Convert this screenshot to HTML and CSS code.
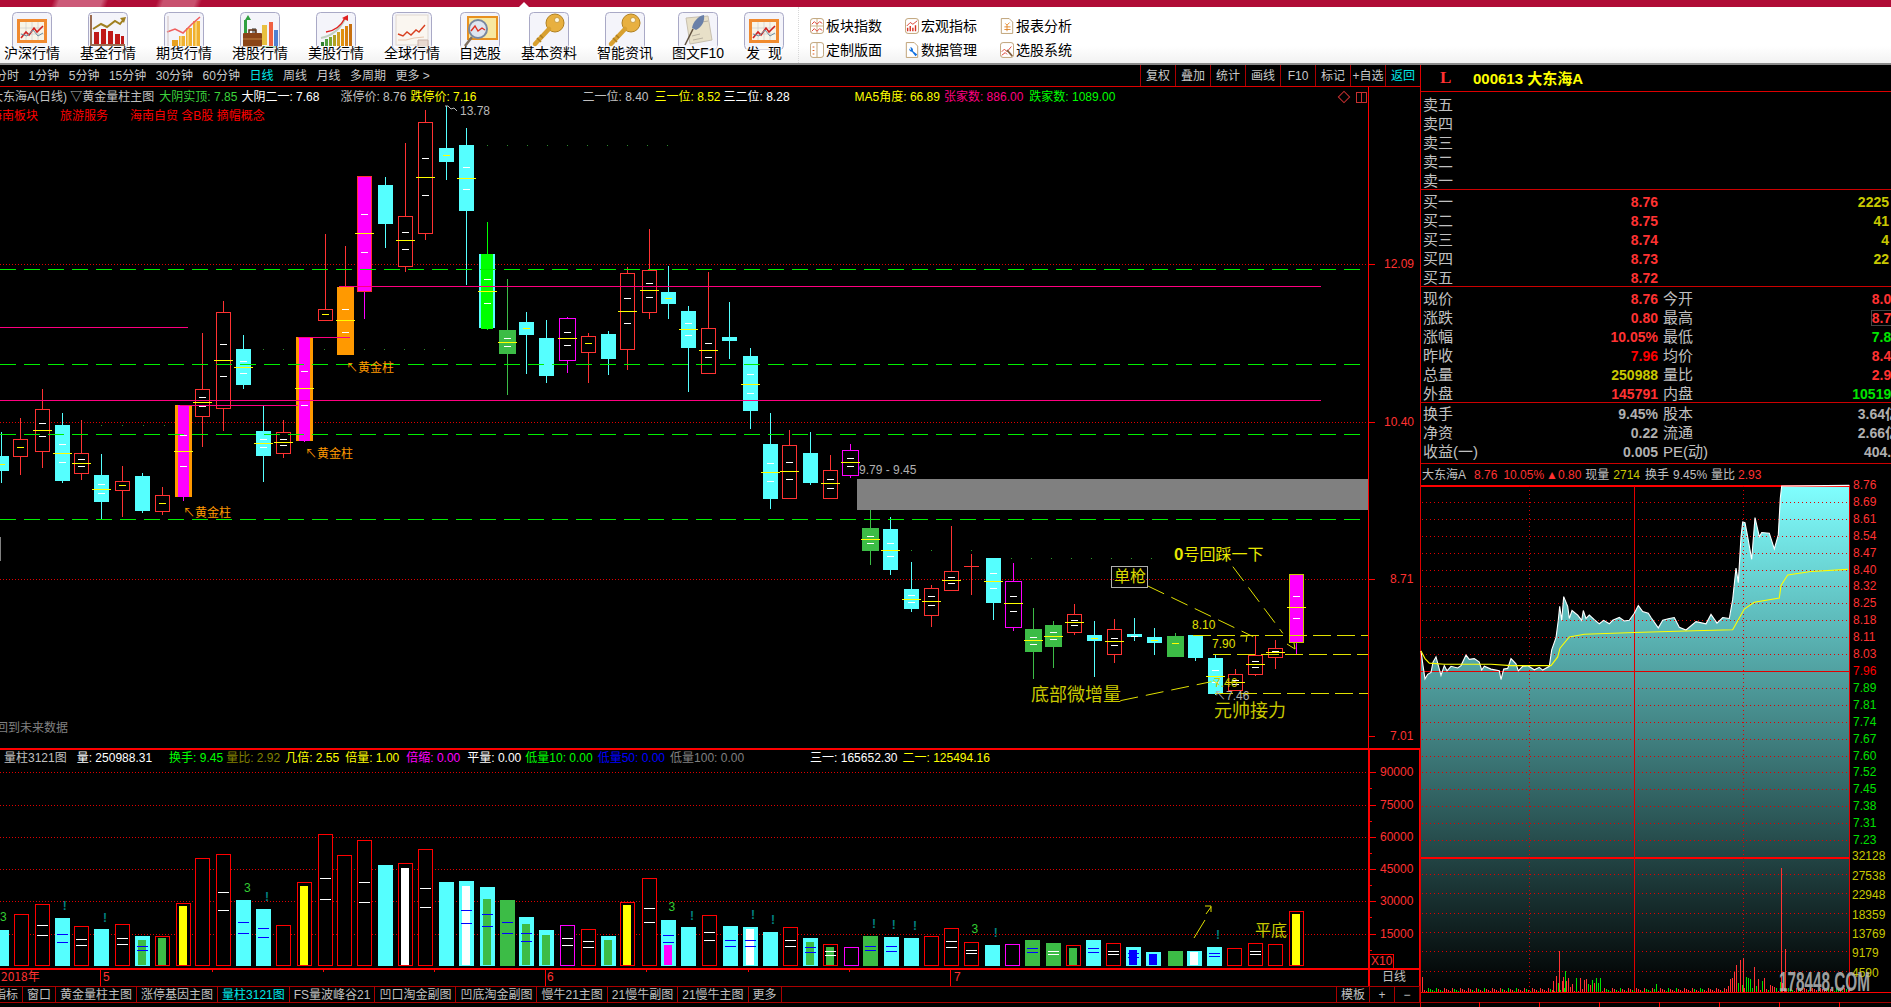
FILE: index.html
```html
<!DOCTYPE html>
<html lang="zh-CN">
<head>
<meta charset="utf-8">
<title>大东海A 000613</title>
<link rel="stylesheet" href="styles.css">
</head>
<body>
<svg class="defs" width="0" height="0" aria-hidden="true">
  <symbol id="ic-chart" viewBox="0 0 40 38">
    <rect x="5" y="7" width="30" height="24" fill="#f08a30"/><rect x="8" y="10" width="24" height="18" fill="#f8f4e8"/>
    <path d="M8 16h24M8 22h24M14 10v18M20 10v18M26 10v18" stroke="#c8c8c8" stroke-width=".6"/>
    <path d="M9 26l5-6 3 3 5-7 3 4 6-6" fill="none" stroke="#d02020" stroke-width="1.6"/>
    <path d="M9 22l6 2 6-6 5 6 5-3" fill="none" stroke="#7090a0" stroke-width="1"/>
  </symbol>
  <symbol id="ic-fund" viewBox="0 0 40 38">
    <path d="M3 3v30h34" fill="none" stroke="#9a6a50" stroke-width="2"/>
    <path d="M6 20h5v12H6zM13 17h5v15h-5zM20 19h5v13h-5zM27 22h5v10h-5zM33 24h3v8h-3z" fill="#c01818"/>
    <path d="M5 17l8-5 6 3 8-6 5 3 4-5" fill="none" stroke="#a08020" stroke-width="2"/>
    <path d="M32 6l6-1-2 6z" fill="#a08020"/>
  </symbol>
  <symbol id="ic-future" viewBox="0 0 40 38">
    <path d="M15 24h6v10h-6zM22 16h6v18h-6zM29 9h7v25h-7z" fill="#f0b030"/><path d="M8 28h6v6H8z" fill="#e8a020"/>
    <path d="M17 24v10M24 16v18M32 9v25" stroke="#fff0b0" stroke-width="1"/>
    <path d="M3 20l8-3 8 4 9-9 8-7" fill="none" stroke="#f06060" stroke-width="1.6"/>
    <path d="M4 4v30" stroke="#d0c0c0"/>
  </symbol>
  <symbol id="ic-hk" viewBox="0 0 40 38">
    <path d="M8 3l-3 5h6zM4 8h3v18H4z" fill="#30a040"/>
    <path d="M12 16h4v10h-4z" fill="#909090"/><path d="M22 13h5v20h-5z" fill="#e8c040"/><path d="M29 10h4v24h-4z" fill="#f06040"/><path d="M34 18h4v16h-4z" fill="#5080d0"/>
    <rect x="3" y="21" width="19" height="14" rx="1" fill="#8a4418"/><path d="M9 21v-3h7v3" fill="none" stroke="#5a2c10" stroke-width="1.5"/><path d="M3 27h19" stroke="#c08040"/>
    <path d="M22 35h14" stroke="#30a040" stroke-width="1.5"/>
  </symbol>
  <symbol id="ic-us" viewBox="0 0 40 38">
    <path d="M5 30h3v4H5z" fill="#308030"/><path d="M9 27h3v7H9z" fill="#50a040"/><path d="M13 25h3v9h-3z" fill="#80a830"/><path d="M17 23h3v11h-3z" fill="#b0a020"/><path d="M21 20h3v14h-3z" fill="#d0a020"/><path d="M25 17h3v17h-3z" fill="#e09010"/><path d="M29 14h3v20h-3z" fill="#d88010"/><path d="M33 12h3v22h-3z" fill="#c87010"/>
    <path d="M5 26c10-2 18-7 24-19" fill="none" stroke="#c0d0c0" stroke-width="2"/>
    <path d="M10 20c8-1 15-6 19-14" fill="none" stroke="#e02020" stroke-width="1.4"/><path d="M26 6l6-3v6z" fill="#e02020"/>
  </symbol>
  <symbol id="ic-world" viewBox="0 0 40 38">
    <rect x="4" y="3" width="32" height="30" fill="#faf6f0" stroke="#e0d8d0"/>
    <path d="M6 22l5 2 4-4 4 3 5-5 3 2 6-7" fill="none" stroke="#d84020" stroke-width="1.4"/>
    <path d="M6 28l8 0 8-2 10-1" fill="none" stroke="#e8c8b0" stroke-width="1.2"/>
    <path d="M26 28h10v7H26z" fill="#e8d8d0" stroke="#c8b0a8"/>
  </symbol>
  <symbol id="ic-search" viewBox="0 0 40 38">
    <rect x="8" y="5" width="29" height="22" fill="#f8e8a0" stroke="#e89020" stroke-width="2"/>
    <circle cx="18" cy="17" r="9" fill="#dfe6f0" stroke="#7a88a0" stroke-width="2"/>
    <path d="M11 19l4-5 3 5 4-3 3 2" fill="none" stroke="#e03020" stroke-width="1.4"/>
    <path d="M12 25l-7 9" stroke="#807060" stroke-width="2.5"/>
  </symbol>
  <symbol id="ic-key" viewBox="0 0 40 38">
    <circle cx="26" cy="11" r="9" fill="#e8b040" stroke="#b08020"/><circle cx="28" cy="8" r="2.5" fill="#fff8e0" stroke="#b08020" stroke-width=".6"/>
    <path d="M20 17L6 32" stroke="#d8a030" stroke-width="4.5" stroke-linecap="round"/>
    <path d="M8 26l4 4M11 23l3 3" stroke="#b08020" stroke-width="1.6"/>
  </symbol>
  <symbol id="ic-quill" viewBox="0 0 40 38">
    <path d="M8 6l22-2 4 24-22 4z" fill="#e8e0c8" stroke="#c8c0b0"/>
    <path d="M14 24l8-2M15 28l10-2M24 10l6-1" stroke="#b8b0a0"/>
    <path d="M26 3c-6 1-11 7-12 13l4 2c6-3 9-9 8-15z" fill="#6a80a8"/><path d="M15 17L7 33" stroke="#605040" stroke-width="1.5"/>
  </symbol>
  <symbol id="sm-grid" viewBox="0 0 16 18"><rect x=".5" y=".5" width="15" height="17" rx="3" fill="#fff" stroke="#b89868"/><path d="M1 9h14M8 1v16" stroke="#c8a878"/><path d="M2 7l3-3 3 3 3-3 3 2M2 15l3-3 3 3 3-3 3 2" fill="none" stroke="#d83020"/></symbol>
  <symbol id="sm-bars" viewBox="0 0 16 18"><rect x=".5" y=".5" width="15" height="17" rx="3" fill="#fff" stroke="#b89868"/><path d="M3 15V11M6 15V9M9 15V11M12 15V8" stroke="#d83020" stroke-width="1.6"/><path d="M2 9l4-4 3 2 5-4" fill="none" stroke="#d83020"/></symbol>
  <symbol id="sm-doc" viewBox="0 0 16 18"><path d="M1.5.5h9l4 4v13h-13z" fill="#fff" stroke="#b89868"/><path d="M6 6l2 2 3-3M5 10h7M5 13h7M8 8v7" fill="none" stroke="#e08020"/></symbol>
  <symbol id="sm-panel" viewBox="0 0 16 18"><rect x=".5" y=".5" width="15" height="17" rx="3" fill="#fff" stroke="#b89868"/><path d="M8 1v16" stroke="#b89868"/><path d="M4 5v1M4 9v1M4 13v1" stroke="#e06020" stroke-width="2"/></symbol>
  <symbol id="sm-tool" viewBox="0 0 16 18"><path d="M1.5.5h9l4 4v13h-13z" fill="#fff" stroke="#b89868"/><path d="M5 7a3 3 0 0 0 3 4l4 5 2-2-5-4a3 3 0 0 0-3-4l1 2-1 1z" fill="#1070e0"/></symbol>
  <symbol id="sm-pick" viewBox="0 0 16 18"><rect x=".5" y=".5" width="15" height="17" rx="3" fill="#fff" stroke="#b89868"/><path d="M2 11l3-3 3 3 5-6" fill="none" stroke="#d83020"/><path d="M2 15l4-3 2 2" fill="none" stroke="#d83020"/><path d="M8 9l6 7" stroke="#806040" stroke-width="2"/></symbol>
</svg>

<div class="app">
  <div class="titlebar"><span class="notch"></span></div>
  <header class="toolbar">
    <div class="tool w76"><svg class="tool-icon"><rect class="frame" x=".5" y=".5" width="39" height="37" rx="4"/><use href="#ic-chart" width="40" height="38"/></svg><span class="tool-label">沪深行情</span></div>
    <div class="tool w76"><svg class="tool-icon"><rect class="frame" x=".5" y=".5" width="39" height="37" rx="4"/><use href="#ic-fund" width="40" height="38"/></svg><span class="tool-label">基金行情</span></div>
    <div class="tool w76"><svg class="tool-icon"><rect class="frame" x=".5" y=".5" width="39" height="37" rx="4"/><use href="#ic-future" width="40" height="38"/></svg><span class="tool-label">期货行情</span></div>
    <div class="tool w76"><svg class="tool-icon"><rect class="frame" x=".5" y=".5" width="39" height="37" rx="4"/><use href="#ic-hk" width="40" height="38"/></svg><span class="tool-label">港股行情</span></div>
    <div class="tool w76"><svg class="tool-icon"><rect class="frame" x=".5" y=".5" width="39" height="37" rx="4"/><use href="#ic-us" width="40" height="38"/></svg><span class="tool-label">美股行情</span></div>
    <div class="tool w76"><svg class="tool-icon"><rect class="frame" x=".5" y=".5" width="39" height="37" rx="4"/><use href="#ic-world" width="40" height="38"/></svg><span class="tool-label">全球行情</span></div>
    <div class="tool w60"><svg class="tool-icon"><rect class="frame" x=".5" y=".5" width="39" height="37" rx="4"/><use href="#ic-search" width="40" height="38"/></svg><span class="tool-label">自选股</span></div>
    <div class="tool w78"><svg class="tool-icon"><rect class="frame" x=".5" y=".5" width="39" height="37" rx="4"/><use href="#ic-key" width="40" height="38"/></svg><span class="tool-label">基本资料</span></div>
    <div class="tool w74"><svg class="tool-icon"><rect class="frame" x=".5" y=".5" width="39" height="37" rx="4"/><use href="#ic-key" width="40" height="38"/></svg><span class="tool-label">智能资讯</span></div>
    <div class="tool w72"><svg class="tool-icon"><rect class="frame" x=".5" y=".5" width="39" height="37" rx="4"/><use href="#ic-quill" width="40" height="38"/></svg><span class="tool-label">图文F10</span></div>
    <div class="tool w60"><svg class="tool-icon"><rect class="frame" x=".5" y=".5" width="39" height="37" rx="4"/><use href="#ic-chart" width="40" height="38"/></svg><span class="tool-label">发&nbsp;&nbsp;现</span></div>
    <div class="tool-links">
      <a class="link"><svg class="link-icon"><use href="#sm-grid"/></svg>板块指数</a>
      <a class="link"><svg class="link-icon"><use href="#sm-bars"/></svg>宏观指标</a>
      <a class="link"><svg class="link-icon"><use href="#sm-doc"/></svg>报表分析</a>
      <a class="link"><svg class="link-icon"><use href="#sm-panel"/></svg>定制版面</a>
      <a class="link"><svg class="link-icon"><use href="#sm-tool"/></svg>数据管理</a>
      <a class="link"><svg class="link-icon"><use href="#sm-pick"/></svg>选股系统</a>
    </div>
  </header>

  <div class="workspace">
    <main class="main">
      <nav class="periods">
        <span>分时</span><span>1分钟</span><span>5分钟</span><span>15分钟</span><span>30分钟</span><span>60分钟</span><span class="cur">日线</span><span>周线</span><span>月线</span><span>多周期</span><span>更多 &gt;</span>
        <div class="btns"><span>复权</span><span>叠加</span><span>统计</span><span>画线</span><span>F10</span><span>标记</span><span>+自选</span><span class="cur">返回</span></div>
      </nav>

      <section class="pane pane-price">
        <svg id="priceChart" class="chart" viewBox="0 87 1420 661" width="1420" height="661"></svg>
        <div class="legend">
          <div class="legend-row">
            <span class="grey name">大东海A(日线) ▽黄金量柱主图</span>
            <span class="green3 ml5">大阴实顶: 7.85</span>
            <span class="white ml4">大阴二一: 7.68</span>
            <span class="grey ml21">涨停价: 8.76</span>
            <span class="yellow ml4">跌停价: 7.16</span>
            <span class="grey ml106">二一位: 8.40</span>
            <span class="yellow ml6">三一位: 8.52</span>
            <span class="white ml3">三二位: 8.28</span>
            <span class="yellow ml65">MA5角度: 66.89</span>
            <span class="pink ml4">张家数: 886.00</span>
            <span class="lime ml6">跌家数: 1089.00</span>
          </div>
          <div class="legend-row concepts">
            <span class="red trim">海南板块</span><span class="red ml22">旅游服务</span><span class="red ml22">海南自贸 含B股 摘帽概念</span>
          </div>
        </div>
      </section>

      <section class="pane pane-volume">
        <svg id="volumeChart" class="chart" viewBox="0 748 1420 238" width="1420" height="238"></svg>
        <div class="legend legend-vol">
          <div class="legend-row">
            <span class="grey v-name">量柱3121图</span>
            <span class="white ml10">量: 250988.31</span>
            <span class="lime ml17">换手: 9.45</span>
            <span class="olive ml3">量比: 2.92</span>
            <span class="yellow ml5">几倍: 2.55</span>
            <span class="yellow ml6">倍量: 1.00</span>
            <span class="magenta ml7">倍缩: 0.00</span>
            <span class="white ml7">平量: 0.00</span>
            <span class="lime ml4">低量10: 0.00</span>
            <span class="blue ml5">低量50: 0.00</span>
            <span class="dim ml5">低量100: 0.00</span>
            <span class="white ml66">三一: 165652.30</span>
            <span class="yellow ml5">二一: 125494.16</span>
          </div>
        </div>
      </section>

      <nav class="tabs">
        <span class="tab first">指标</span><span class="tab">窗口</span><span class="tab">黄金量柱主图</span><span class="tab">涨停基因主图</span><span class="tab cur">量柱3121图</span><span class="tab">FS量波峰谷21</span><span class="tab">凹口淘金副图</span><span class="tab">凹底淘金副图</span><span class="tab">慢牛21主图</span><span class="tab">21慢牛副图</span><span class="tab">21慢牛主图</span><span class="tab">更多</span>
        <div class="tabs-right"><span class="tab">模板</span><span class="tab sq">+</span><span class="tab sq">−</span></div>
      </nav>
    </main>

    <aside class="side">
      <div class="quote-head"><span class="lv">L</span><span class="code">000613 大东海A</span></div>

      <div class="block b-sell">
        <div class="row"><span class="lb">卖五</span></div>
        <div class="row"><span class="lb">卖四</span></div>
        <div class="row"><span class="lb">卖三</span></div>
        <div class="row"><span class="lb">卖二</span></div>
        <div class="row"><span class="lb">卖一</span></div>
      </div>

      <div class="block b-buy">
        <div class="row"><span class="lb">买一</span><span class="val up">8.76</span><span class="val vol">2225</span></div>
        <div class="row"><span class="lb">买二</span><span class="val up">8.75</span><span class="val vol">41</span></div>
        <div class="row"><span class="lb">买三</span><span class="val up">8.74</span><span class="val vol">4</span></div>
        <div class="row"><span class="lb">买四</span><span class="val up">8.73</span><span class="val vol">22</span></div>
        <div class="row"><span class="lb">买五</span><span class="val up">8.72</span></div>
      </div>

      <div class="block b-stat">
        <div class="row"><span class="lb">现价</span><span class="val up">8.76</span><span class="lb2">今开</span><span class="val up">8.08</span></div>
        <div class="row"><span class="lb">涨跌</span><span class="val up">0.80</span><span class="lb2">最高</span><span class="val up boxed">8.76</span></div>
        <div class="row"><span class="lb">涨幅</span><span class="val up">10.05%</span><span class="lb2">最低</span><span class="val down">7.85</span></div>
        <div class="row"><span class="lb">昨收</span><span class="val flat">7.96</span><span class="lb2">均价</span><span class="val up">8.40</span></div>
        <div class="row"><span class="lb">总量</span><span class="val vol2">250988</span><span class="lb2">量比</span><span class="val up">2.93</span></div>
        <div class="row"><span class="lb">外盘</span><span class="val up">145791</span><span class="lb2">内盘</span><span class="val down">105197</span></div>
      </div>

      <div class="block b-fin">
        <div class="row"><span class="lb">换手</span><span class="val gr">9.45%</span><span class="lb2">股本</span><span class="val gr">3.64亿</span></div>
        <div class="row"><span class="lb">净资</span><span class="val gr">0.22</span><span class="lb2">流通</span><span class="val gr">2.66亿</span></div>
        <div class="row"><span class="lb">收益(一)</span><span class="val gr">0.005</span><span class="lb2">PE(动)</span><span class="val gr">404.5</span></div>
      </div>

      <div class="ticker">
        <span class="grey">大东海A</span><span class="up t8">8.76</span><span class="up t6">10.05%</span><span class="up t2">▲0.80</span><span class="grey t4">现量</span><span class="vol2 t4">2714</span><span class="grey t5">换手</span><span class="grey t4">9.45%</span><span class="grey t4">量比</span><span class="up t3">2.93</span>
      </div>

      <svg id="intraChart" class="chart" viewBox="1420 485 479 522" width="479" height="522"></svg>
    </aside>
  </div>
</div>
<script src="chart.js"></script>
</body>
</html>
```
FILE: styles.css
```css
* { box-sizing: border-box; }
html, body { margin: 0; padding: 0; width: 1891px; height: 1007px; overflow: hidden; background: #000; }
body { font: 12px/1 "Liberation Sans", "Noto Sans CJK SC", sans-serif; color: #c0c0c0; }
.defs { position: absolute; }
.app { width: 1899px; }

/* title + toolbar */
.titlebar {
  height: 7px; position: relative; background-color: #b00c36;
  background-image: linear-gradient(110deg, transparent 0 50px, #cc5a78 56px 96px, transparent 102px 148px, #c8506e 154px 184px, transparent 190px);
}
.notch { position: absolute; left: 519px; top: 2px; border: 5px solid transparent; border-top: 0; border-bottom-color: #fff; }
.toolbar {
  height: 58px; display: flex; align-items: flex-start; padding-left: 0; margin-left: -6px;
  background: linear-gradient(#fff 70%, #f2f2f2); border-bottom: 2px solid #8a8a8a;
}
.tool { display: flex; flex-direction: column; align-items: center; padding-top: 5px; flex: none; }
.w76 { width: 76px; } .w60 { width: 60px; } .w78 { width: 78px; } .w74 { width: 74px; } .w72 { width: 72px; }
.tool-icon { width: 40px; height: 38px; display: block; }
.frame { fill: #f4f4fa; stroke: #a9a9c6; }
.tool-label { margin-top: -4px; font-size: 14px; line-height: 14px; color: #000; white-space: nowrap; background: rgba(255,255,255,.55); }
.tool-links {
  margin-left: 4px; padding: 5px 0 0 14px; height: 56px; display: grid; border-left: 1px dotted #d8d8d8;
  grid-template-columns: repeat(3, 95px); grid-auto-rows: 24px; align-content: center;
}
.link { display: flex; align-items: center; gap: 2px; font-size: 14px; color: #000; white-space: nowrap; }
.link-icon { width: 14px; height: 16px; flex: none; margin-left: -3px; }

/* layout */
.workspace { display: flex; height: 942px; }
.main { width: 1420px; flex: none; }
.side { width: 479px; flex: none; border-left: 1px solid #d00; }

.periods { height: 22px; display: flex; align-items: center; gap: 9.5px; border-bottom: 1px solid #d00; padding-left: 0; margin-left: -5px; color: #c8c8c8; white-space: nowrap; }
.periods .cur, .tab.cur { color: #00e8e8; }
.btns { margin-left: auto; display: flex; align-self: stretch; }
.btns span { width: 35px; display: flex; align-items: center; justify-content: center; border-left: 1px solid #a00; }

.pane { position: relative; }
.pane-price { height: 661px; }
.pane-volume { height: 238px; }
.chart { display: block; shape-rendering: crispEdges; overflow: visible; }
.legend { position: absolute; left: -9px; top: 0; white-space: nowrap; }
.legend-vol { left: 4px; top: 0; }
.legend-row { display: flex; height: 19px; align-items: center; }
.concepts { margin-left: -1px; }
.grey { color: #c0c0c0; } .white { color: #fff; } .yellow { color: #ff0; } .green3 { color: #3cd33c; } .lime { color: #0f0; }
.red { color: #f00; } .pink { color: #ff0080; } .olive { color: #808000; } .magenta { color: #f0f; } .blue { color: #0000ff; } .dim { color: #808080; }
.ml3 { margin-left: 3px; } .ml4 { margin-left: 4px; } .ml5 { margin-left: 5px; } .ml6 { margin-left: 6px; } .ml7 { margin-left: 7px; } .ml10 { margin-left: 10px; } .ml17 { margin-left: 17px; } .ml21 { margin-left: 21px; } .ml22 { margin-left: 22px; } .ml65 { margin-left: 65px; } .ml66 { margin-left: 66px; } .ml106 { margin-left: 106px; }

.tabs { height: 17px; display: flex; border-top: 1px solid #a00; border-bottom: 1px solid #a00; margin-left: -10px; color: #c0c0c0; white-space: nowrap; }
.tab { padding: 0 4px; border-right: 1px solid #a00; display: flex; align-items: center; justify-content: center; }
.tabs-right { margin-left: auto; display: flex; }
.tabs-right .tab:first-child { border-left: 1px solid #a00; }
.sq { width: 25px; }

/* quote panel */
.quote-head { height: 27px; display: flex; align-items: center; border-bottom: 1px solid #d00; }
.lv { color: #ff3232; font: bold 17px "Liberation Serif", serif; margin-left: 19px; width: 33px; }
.code { color: #ff0; font-size: 15px; font-weight: bold; }
.block { border-bottom: 1px solid #c00; padding-left: 2px; padding-top: 2px; }
.b-sell { height: 98px; padding-top: 3px; } .b-buy { height: 97px; } .b-stat { height: 116px; } .b-fin { height: 61px; padding-top: 1px; }
.row { height: 19px; display: grid; grid-template-columns: 48px 187px 42px 1fr; align-items: center; }
.lb, .lb2 { font-size: 15px; color: #c0c0c0; white-space: nowrap; }
.lb2 { padding-left: 5px; grid-column: 3; }
.val { font-size: 14px; font-weight: bold; text-align: right; white-space: nowrap; grid-column: 2; }
.lb2 + .val { grid-column: 4; }
.row > .val + .val { grid-column: 4; padding-right: 10px; }
.up { color: #ff3232; } .down { color: #00e600; } .flat { color: #f00; } .vol, .vol2 { color: #c8c800; } .gr { color: #b0b0b0; }
.boxed { justify-self: end; outline: 1px solid #444; }
.ticker { height: 21px; display: flex; align-items: center; padding-left: 1px; white-space: nowrap; }
.t2 { margin-left: 2px; } .t3 { margin-left: 3px; } .t4 { margin-left: 4px; } .t5 { margin-left: 5px; } .t6 { margin-left: 6px; } .t8 { margin-left: 8px; }

/* svg chart text */
.ax { font: 12px "Liberation Sans", sans-serif; }
.note { font-family: "Noto Sans CJK SC", sans-serif; }
.n12 { font-size: 12px; } .n16 { font-size: 16px; } .n18 { font-size: 18px; }
.b { font-weight: bold; }
.wm { font: bold 27px "Liberation Sans", sans-serif; fill: #b8b8b8; opacity: .85; }
.soft { shape-rendering: auto; }
```
FILE: chart.js
```js
(function () {
  var R = '#ff3232', C = '#55ffff', G = '#3cbc46', RED = '#ff0000';
  var rect = function (x, y, w, h, f, s) { return '<rect x="' + x + '" y="' + y + '" width="' + w + '" height="' + h + '" fill="' + (f || 'none') + '"' + (s ? ' stroke="' + s + '"' : '') + '/>'; };
  var line = function (a, b, c, d, s, extra) { return '<line x1="' + a + '" y1="' + b + '" x2="' + c + '" y2="' + d + '" stroke="' + s + '" ' + (extra || '') + '/>'; };
  var text = function (x, y, t, f, cls, anchor) { return '<text x="' + x + '" y="' + y + '" fill="' + f + '" class="' + (cls || 'ax') + '" dominant-baseline="middle"' + (anchor ? ' text-anchor="' + anchor + '"' : '') + '>' + t + '</text>'; };

  /* ---- price pane ---- */
  // [cx, wickTop, wickBottom, bodyTop, bodyBottom, type, yellow, white1, white2] in zoom units
  var z7 = [
    [3, 905, 1060, 978, 1022, 'c', 1002], [45, 865, 1035, 928, 977, 'r', 952], [93, 778, 1013, 838, 962, 'r', 901, 880, 919],
    [138, 850, 1058, 885, 1052, 'c', 970, 943, 997], [182, 870, 1050, 970, 1028, 'r', 1000, 988, 1009], [227, 972, 1168, 1035, 1115, 'c', 1078, 1063, 1090],
    [274, 1008, 1160, 1054, 1079, 'r', 1066], [319, 1030, 1148, 1038, 1142, 'c'], [364, 1072, 1155, 1096, 1142, 'r', 1120],
    [409, 825, 1113, 825, 1100, 'P', 964, 915, 1009], [453, 610, 950, 778, 857, 'r', 817, 802, 829], [500, 514, 902, 547, 835, 'r', 691, 643, 739],
    [545, 615, 776, 657, 765, 'c', 712, 694, 730], [590, 828, 1055, 903, 977, 'c', 940, 928, 952], [635, 870, 983, 907, 968, 'r', 937, 928, 946],
    [682, 622, 935, 622, 932, 'P', 775, 724, 826], [727, 312, 570, 538, 569, 'r', 553], [772, 348, 675, 470, 675, 'O', 571, 538, 607],
    [816, 138, 566, 138, 482, 'M', 310, 253, 367], [863, 141, 353, 165, 282, 'c'], [908, 40, 425, 259, 407, 'r', 331, 307, 358],
    [953, -60, 330, -24, 308, 'r', 142, 85, 196], [998, -72, 150, 54, 96, 'c', 76], [1043, -6, 465, 45, 243, 'c', 145, 112, 178],
    [1090, 277, 600, 372, 594, 'B', 484, 448, 520], [1135, 447, 795, 600, 672, 'g', 637, 625, 649], [1179, 546, 732, 576, 615, 'c', 595],
    [1224, 571, 758, 624, 738, 'c'], [1271, 561, 728, 565, 689, 'm', 625, 607, 646], [1316, 610, 758, 619, 665, 'r', 640],
    [1361, 603, 735, 612, 687, 'c'], [1405, 412, 720, 430, 656, 'r', 544, 505, 580], [1453, 297, 566, 419, 545, 'r', 481, 460, 502],
    [1497, 408, 566, 486, 522, 'c', 505], [1542, 529, 785, 543, 654, 'c', 598, 580, 616],
    [1587, 426, 730, 595, 728, 'r', 661, 640, 682], [1634, 516, 687, 621, 633, 'c'], [1679, 654, 896, 678, 843, 'c', 763, 733, 790],
    [1724, 849, 1136, 942, 1107, 'c', 1027, 1000, 1054], [1768, 900, 1103, 946, 1103, 'r', 1024, 997, 1048], [1815, 906, 1064, 969, 1059, 'c'],
    [1860, 975, 1107, 1021, 1103, 'r', 1060, 1048, 1075], [1905, 942, 1043, 961, 1034, 'm', 997, 985, 1009]
  ].map(function (c) {
    return [c[0] / 2.24].concat(c.slice(1).map(function (v) { return typeof v === 'number' ? v / 3 + 130 : v; }));
  });
  var z9 = [
    [85, 30, 195, 84, 153, 'g', 118, 109, 130], [141, 52, 225, 87, 210, 'c', 151, 130, 169], [200, 186, 335, 267, 327, 'c', 298, 286, 307],
    [256, 255, 381, 265, 344, 'r', 304, 289, 316], [312, 78, 270, 214, 269, 'r', 241, 232, 250], [368, 163, 285, 199, 200, 'x'],
    [427, 174, 360, 174, 309, 'c', 244, 220, 265], [483, 190, 392, 244, 380, 'm', 310, 289, 334], [539, 324, 537, 388, 456, 'g', 421, 412, 433],
    [595, 363, 504, 375, 441, 'g', 409, 397, 418], [654, 312, 405, 343, 395, 'r', 367, 361, 376], [710, 363, 531, 405, 423, 'c', 414],
    [766, 357, 490, 388, 461, 'r', 424, 415, 436], [822, 354, 423, 402, 411, 'c', undefined, 407, 407], [878, 384, 465, 411, 429, 'c', 420],
    [937, 399, 468, 408, 471, 'g', 428], [993, 405, 483, 405, 474, 'c'], [1049, 465, 585, 474, 581, 'c', 529, 511, 547],
    [1105, 507, 570, 523, 570, 'r', 547, 539, 553], [1163, 407, 528, 466, 521, 'r', 493, 484, 502], [1219, 420, 507, 445, 470, 'r', 457, 453, 461],
    [1276, 222, 462, 222, 425, 'Y', 322, 289, 355]
  ].map(function (c) {
    return [840 + c[0] / 2.8].concat(c.slice(1).map(function (v) { return typeof v === 'number' ? v / 3 + 500 : v; }));
  });

  function candle(c) {
    var cx = Math.round(c[0]), wt = Math.round(c[1]), wb = Math.round(c[2]), bt = Math.round(c[3]), bb = Math.round(c[4]), t = c[5], o = '';
    var wick = { c: C, r: R, m: '#ff00ff', g: G, P: '#ff00ff', O: R, M: '#ff00ff', B: '#00ff00', Y: '#ff00ff', x: R }[t];
    o += line(cx + .5, wt, cx + .5, wb, wick);
    var h = Math.max(bb - bt, 2);
    if (t === 'c') o += rect(cx - 7, bt, 15, h, C);
    if (t === 'g') o += rect(cx - 8, bt, 17, h, G);
    if (t === 'r') o += rect(cx - 7 + .5, bt + .5, 14, h, '#000', R);
    if (t === 'm') o += rect(cx - 8 + .5, bt + .5, 16, h, '#000', '#ff00ff');
    if (t === 'P') o += rect(cx - 8, bt, 17, h, '#ff9900') + rect(cx - 5, bt, 11, h, '#ff00ff');
    if (t === 'O') o += rect(cx - 8, bt, 17, h, '#ff9900');
    if (t === 'M') o += rect(cx - 7 + .5, bt + .5, 14, h, '#ff00ff', R);
    if (t === 'B') o += rect(cx - 8, bt, 16, h, C) + rect(cx - 6, bt, 12, h + 1, '#00ff00');
    if (t === 'Y') o += rect(cx - 7 + .5, bt + .5, 14, h, '#ff00ff', '#c8c800');
    if (t === 'x') o += rect(cx - 7, bt, 15, 1, R);
    if (c[7] !== undefined) { o += rect(cx - 3, Math.round(c[7]), 7, 1, '#fff'); o += rect(cx - 3, Math.round(c[8]), 7, 1, '#fff'); }
    if (c[6] !== undefined) {
      var wide = c[7] !== undefined && c[8] - c[7] > 2;
      o += wide ? rect(cx - 9, Math.round(c[6]), 19, 1, '#ffff00') : rect(cx - 3, Math.round(c[6]), 7, 1, '#ffff00');
    }
    return o;
  }

  var p = '';
  [264, 422, 579].forEach(function (y) { p += line(0, y + .5, 1368, y + .5, '#e00000', 'stroke-dasharray="1 2"'); });
  // little green dots
  var dots = [[1090, 1500, 45, 46], [590, 1000, 45, 658], [226, 370, 47, 885]];
  dots.forEach(function (d) { for (var x = d[0]; x <= d[1]; x += d[2]) p += rect(Math.round(x / 2.24), Math.round(d[3] / 3 + 130), 1, 1, '#2a8a2a'); });
  for (var dx = 200; dx <= 880; dx += 56) p += rect(Math.round(840 + dx / 2.8), dx < 400 ? 550 : 558, 1, 1, '#2a9a2a');
  p += z7.concat(z9).map(candle).join('');
  // zone + lines
  p += rect(857, 479, 511, 31, '#808080');
  [269, 364, 434, 519].forEach(function (y) { p += line(0, y + .5, 1368, y + .5, '#00ee00', 'stroke-dasharray="16 8"'); });
  [[339, 286, 1321], [0, 400, 1321], [0, 327, 188], [298, 337, 350], [180, 405, 298]].forEach(function (l) { p += line(l[0], l[1] + .5, l[2], l[1] + .5, '#ff0080'); });
  [[635, 1368], [654, 1368], [693, 1368]].forEach(function (l, i) {
    var sx = [1193, 1213, 1215][i]; p += line(sx, l[0] + .5, l[1], l[0] + .5, '#e0e000', 'stroke-dasharray="18 6"');
  });
  var dg = function (a, b, c, d) { return line(840 + a / 2.8, 500 + b / 3, 840 + c / 2.8, 500 + d / 3, '#e0e000', 'stroke-dasharray="18 8" class="soft"'); };
  p += dg(862, 258, 1157, 410) + dg(1100, 200, 1240, 400) + dg(785, 602, 1040, 545);
  p += '<path class="soft" d="M1240 636l7 0-1 6M1287 644l8 5-1-6M1213 680l6 5" fill="none" stroke="#e0e000"/>';
  // axis
  p += line(1368.5, 87, 1368.5, 748, RED);
  [[264, '12.09'], [422, '10.40'], [579, '8.71'], [736, '7.01']].forEach(function (a) {
    p += line(1368, a[0] + .5, 1375, a[0] + .5, RED) + text(a[1].length > 4 ? 1384 : 1390, a[0] + 1, a[1], R);
  });
  // annotations
  p += text(460, 112, '13.78', '#b8b8b8');
  p += '<path class="soft" d="M445 106h3l3 3 3-1 3 3" fill="none" stroke="#b8b8b8"/>';
  [[183, 514], [305, 455], [346, 369]].forEach(function (a) {
    p += text(a[0], a[1], '↖黄金柱', '#ff9900', 'note n12');
  });
  p += text(859, 471, '9.79 - 9.45', '#b0b0b0');
  p += text(1174, 556, '<tspan class="b">0</tspan>号回踩一下', '#e8e800', 'note n16');
  p += rect(1111.5, 566.5, 36, 21, 'none', '#b0b0b0') + text(1114, 578, '单枪', '#d8d800', 'note n16');
  p += text(1031, 696, '底部微增量', '#c8c800', 'note n18') + text(1214, 712, '元帅接力', '#c8c800', 'note n18');
  p += text(1192, 626, '8.10', '#e0e000') + text(1212, 645, '7.90', '#e0e000') + text(1214, 684, '7.46', '#c8c800') + text(1214, 697, '↖7.46', '#b0b0b0');
  p += text(-4, 729, '回到未来数据', '#808080', 'note n12');
  p += rect(0, 537, 1, 24, '#808080');
  p += '<rect class="soft" transform="rotate(45 1344 97)" x="1340" y="93" width="8" height="8" fill="none" stroke="#c83030"/>';
  p += rect(1356.5, 92.5, 10, 10, 'none', '#c83030') + line(1361.5, 92, 1361.5, 103, '#c83030');
  document.getElementById('priceChart').innerHTML = p;

  /* ---- volume pane ---- */
  var B = 966, v = '';
  // [cx, top, type, innerColor, innerTop, tickColor, t1, t2]
  var W = '#fff', BL = '#0000ff', GI = G, YE = '#ffff00', MA = '#ff00ff';
  var z5 = [
    [3, 600, 'c'], [46, 553, 'r'], [93, 523, 'r', 0, 0, W, 586, 616], [138, 564, 'c', 0, 0, BL, 613, 637], [182, 589, 'r', 0, 0, W, 628, 646], [227, 597, 'c'],
    [274, 583, 'r', 0, 0, W, 625, 643], [319, 618, 'c', GI, 630, BL, 649, 661], [364, 619, 'r', GI, 625, 0], [409, 520, 'r', YE, 528], [453, 385, 'r'],
    [500, 373, 'r', 0, 0, W, 487, 541], [545, 510, 'c', 0, 0, BL, 577, 610], [590, 537, 'c', 0, 0, BL, 595, 622], [635, 586, 'r'], [682, 457, 'r', YE, 468],
    [727, 313, 'r', 0, 0, W, 445, 508], [771, 376, 'r'], [816, 331, 'r', 0, 0, W, 457, 517], [863, 405, 'c'], [908, 400, 'r', W, 414], [953, 358, 'r', 0, 0, W, 475, 532],
    [998, 456, 'c'], [1043, 453, 'c', W, 468, BL, 541, 580], [1090, 471, 'c', GI, 507, BL, 553, 589], [1135, 510, 'g', 0, 0, BL, 577, 610], [1179, 561, 'c', GI, 582, BL, 610, 634],
    [1224, 600, 'c', GI, 615], [1271, 586, 'm', 0, 0, W, 625, 646], [1316, 598, 'r', 0, 0, W, 634, 652], [1361, 618, 'c', GI, 630], [1405, 517, 'r', YE, 525],
    [1453, 445, 'r', 0, 0, W, 535, 577], [1497, 570, 'c', MA, 645, BL, 616, 637], [1542, 591, 'c']
  ];
  var z6 = [
    [19, 556, 'r', 0, 0, W, 607, 631], [65, 588, 'c', 0, 0, BL, 631, 649], [108, 591, 'c', W, 598, BL, 631, 649], [152, 606, 'c'], [195, 592, 'r', 0, 0, W, 631, 649],
    [240, 624, 'c', GI, 636, BL, 652, 667], [284, 643, 'r', GI, 651, W, 664, 676], [328, 652, 'm'], [371, 618, 'g', 0, 0, BL, 649, 661], [415, 621, 'c', 0, 0, BL, 649, 664],
    [460, 624, 'c'], [504, 619, 'r'], [547, 595, 'r', 0, 0, W, 634, 652], [591, 637, 'r', 0, 0, W, 661, 670], [637, 645, 'c'], [680, 643, 'm'], [724, 630, 'g', 0, 0, BL, 655, 667],
    [768, 639, 'g', 0, 0, W, 664, 673], [813, 646, 'r', GI, 654], [857, 630, 'c', 0, 0, BL, 655, 667], [900, 640, 'r', 0, 0, W, 664, 673], [944, 651, 'c', BL, 660, BL, 670, 680],
    [987, 666, 'c', BL, 672], [1034, 663, 'g'], [1077, 663, 'c', W, 667], [1120, 651, 'c', 0, 0, BL, 670, 679], [1163, 655, 'r'], [1209, 640, 'r', 0, 0, W, 664, 673],
    [1253, 643, 'r'], [1297, 544, 'r', YE, 552]
  ];
  function bar(cx, d) {
    var o = '', x = Math.round(cx), top = Math.round(730 + d[1] / 3), h = B - top, t = d[2];
    if (t === 'c') o += rect(x - 7, top, 15, h, C);
    if (t === 'g') o += rect(x - 7, top, 15, h, G);
    if (t === 'r') o += rect(x - 7 + .5, top + .5, 14, h - 1, '#000', RED);
    if (t === 'm') o += rect(x - 7 + .5, top + .5, 14, h - 1, '#000', MA);
    if (d[3]) { var it = Math.round(730 + d[4] / 3); o += rect(x - 4, it, 8, B - it - 1, d[3]); }
    if (d[5]) {
      o += rect(x - 5, Math.round(730 + d[6] / 3), 11, 1, d[5]) + rect(x - 5, Math.round(730 + d[7] / 3), 11, 1, d[5]);
    }
    return o;
  }
  [772, 805, 837, 869, 901, 934].forEach(function (y) { v += line(0, y + .5, 1369, y + .5, '#e00000', 'stroke-dasharray="1 2"'); });
  z5.forEach(function (d) { v += bar(d[0] / 2.24, d); });
  z6.forEach(function (d) { v += bar(700 + d[0] / 2.178, d); });
  // marks
  [[7, 563], [553, 475], [1504, 533]].forEach(function (m) { v += text(m[0] / 2.24 - 3, 730 + m[1] / 3, '3', '#33cc33'); });
  v += text(700 + 598 / 2.178 - 3, 730 + 598 / 3, '3', '#33cc33');
  [[143, 530], [233, 565], [596, 502], [1548, 560]].forEach(function (m) { v += text(m[0] / 2.24 - 1, 730 + m[1] / 3, '!', '#008080', 'ax b'); });
  [[113, 556], [157, 571], [377, 583], [420, 586], [466, 589], [642, 610], [1126, 616]].forEach(function (m) { v += text(700 + m[0] / 2.178 - 1, 730 + m[1] / 3, '!', '#008080', 'ax b'); });
  v += text(1255, 932, '平底', '#c8c800', 'note n16');
  v += '<path class="soft" d="M1194 938l11-18M1206 914l5-7M1205 906h6v6" fill="none" stroke="#e0e000"/>';
  // frame
  v += rect(0, 748, 1420, 2, RED) + rect(0, 968, 1420, 2, RED) + rect(1368, 748, 2, 238, RED) + rect(1419, 748, 1, 238, RED);
  [[772, '90000'], [805, '75000'], [837, '60000'], [869, '45000'], [901, '30000'], [934, '15000']].forEach(function (a) {
    v += line(1368, a[0] + .5, 1376, a[0] + .5, RED) + line(1368, a[0] + 16.5, 1372, a[0] + 16.5, RED) + text(1380, a[0] + 1, a[1], R);
  });
  v += rect(1369.5, 954.5, 24, 14, 'none', RED) + text(1371, 962, 'X10', R);
  // date row
  v += text(1, 978, '2018年', R, 'note n12') + text(103, 978, '5', R) + text(547, 978, '6', R) + text(954, 978, '7', R);
  [100, 545, 950].forEach(function (x) { v += line(x + .5, 969, x + .5, 986, RED); });
  [212, 323, 434, 646, 748, 849].forEach(function (x) { v += line(x + .5, 969, x + .5, 972, RED); });
  v += text(1394, 978, '日线', '#c0c0c0', 'note n12', 'middle');
  document.getElementById('volumeChart').innerHTML = v;

  /* ---- intraday ---- */
  var fx = function (x) { return +(1410 + x / 3).toFixed(1); }, fy = function (y) { return +(460 + y / 2.87).toFixed(1); };
  var pts = [[30,548],[36,590],[42,628],[50,615],[60,610],[66,580],[75,565],[85,600],[90,618],[100,590],[108,605],[120,592],[140,597],[150,590],[165,560],[175,572],[190,570],[205,580],[212,603],[220,592],[240,600],[265,605],[270,630],[278,600],[290,598],[300,570],[315,585],[322,605],[335,592],[350,590],[370,602],[385,595],[395,603],[415,592],[422,545],[435,510],[442,460],[446,420],[452,460],[458,392],[470,420],[475,455],[483,432],[500,445],[512,460],[517,432],[525,455],[535,445],[550,458],[565,470],[578,460],[595,470],[605,460],[625,452],[640,462],[655,460],[670,440],[682,418],[695,435],[712,440],[720,452],[742,482],[755,460],[775,455],[790,452],[805,480],[825,488],[855,464],[885,470],[900,443],[918,468],[935,452],[955,455],[965,400],[975,310],[982,352],[990,220],[995,178],[1002,180],[1008,210],[1022,285],[1032,165],[1045,220],[1052,208],[1075,210],[1090,255],[1102,215],[1108,110],[1112,75],[1315,73]];
  var avg = [[30,548],[42,570],[55,583],[100,586],[240,586],[300,590],[420,590],[440,565],[447,540],[475,508],[520,500],[670,495],[850,490],[965,487],[1000,428],[1030,408],[1105,396],[1110,360],[1130,330],[1200,320],[1310,314]];
  var toP = function (a) { return a.map(function (q) { return fx(q[0]) + ' ' + fy(q[1]); }).join('L'); };
  var s = '<defs><linearGradient id="fade" gradientUnits="userSpaceOnUse" x1="0" y1="485" x2="0" y2="992"><stop offset="0" stop-color="#80ffff"/><stop offset="1" stop-color="#000"/></linearGradient></defs>';
  s += '<path class="soft" d="M' + fx(30) + ' 992L' + toP(pts) + 'L1848 992Z" fill="url(#fade)"/>';
  var k, y;
  var labels = ['8.76','8.69','8.61','8.54','8.47','8.40','8.32','8.25','8.18','8.11','8.03','7.96','7.89','7.81','7.74','7.67','7.60','7.52','7.45','7.38','7.31','7.23'];
  for (k = 0; k < 22; k++) {
    y = Math.round(485 + 16.91 * k);
    if (k === 0) s += rect(1420, 485, 429, 2, RED);
    else if (k === 11) s += rect(1420, y, 429, 1, '#e00000');
    else s += line(1421, y + .5, 1848, y + .5, '#e00000', 'stroke-dasharray="1 3"');
    s += text(1852, y + 1, labels[k], k < 11 ? R : k === 11 ? RED : '#00e000');
  }
  s += rect(1420, 857, 429, 2, RED);
  var vl = ['32128','27538','22948','18359','13769','9179','4590'];
  [856, 876, 895, 915, 934, 953, 973].forEach(function (ly, i) {
    if (i) s += line(1421, ly + .5 - 2, 1848, ly + .5 - 2, '#e00000', 'stroke-dasharray="1 3"');
    s += text(1851, ly + 1, vl[i], '#c8c800');
  });
  [1528, 1742].forEach(function (x) { s += line(x + .5, 486, x + .5, 992, '#e00000', 'stroke-dasharray="1 3"'); });
  s += line(1633.5, 486, 1633.5, 992, '#e00000') + line(1848.5, 485, 1848.5, 992, '#e00000');
  // volume ticks
  var seed = 7;
  for (var vx = 1421; vx < 1848; vx += 2) {
    seed = (seed * 137 + 59) % 256;
    var active = (vx > 1550 && vx < 1600) || (vx > 1725 && vx < 1785) ? 14 : 4;
    var hh = 1 + (seed % active), col = seed % 3 === 0 ? '#00e000' : R;
    s += line(vx + .5, 992 - hh, vx + .5, 992, col);
  }
  [[1111, 1170], [1123, 1402], [445, 1410], [463, 1465, 1], [995, 1428], [988, 1435], [975, 1450], [968, 1470], [1030, 1455], [455, 1485], [435, 1482], [425, 1495], [1005, 1485, 1], [1018, 1490, 1], [33, 1485], [735, 1505, 1]].forEach(function (b) {
    s += line(Math.round(fx(b[0])) + .5, fy(b[1]), Math.round(fx(b[0])) + .5, 992, b[2] ? '#00e000' : R);
  });
  s += '<path class="soft" d="M' + toP(pts) + '" fill="none" stroke="#fff" stroke-width="1.1"/>';
  s += '<path class="soft" d="M' + toP(avg) + '" fill="none" stroke="#ffff00" stroke-width="1.1"/>';
  s += rect(1420, 992, 479, 1, RED) + rect(1420, 1002, 479, 1, '#a00000');
  for (var tx = 1478; tx < 1891; tx += 60) s += line(tx + .5, 1002, tx + .5, 1007, RED);
  s += '<text x="1778" y="991" class="wm" textLength="91" lengthAdjust="spacingAndGlyphs">178448.COM</text>';
  document.getElementById('intraChart').innerHTML = s;
})();
```
